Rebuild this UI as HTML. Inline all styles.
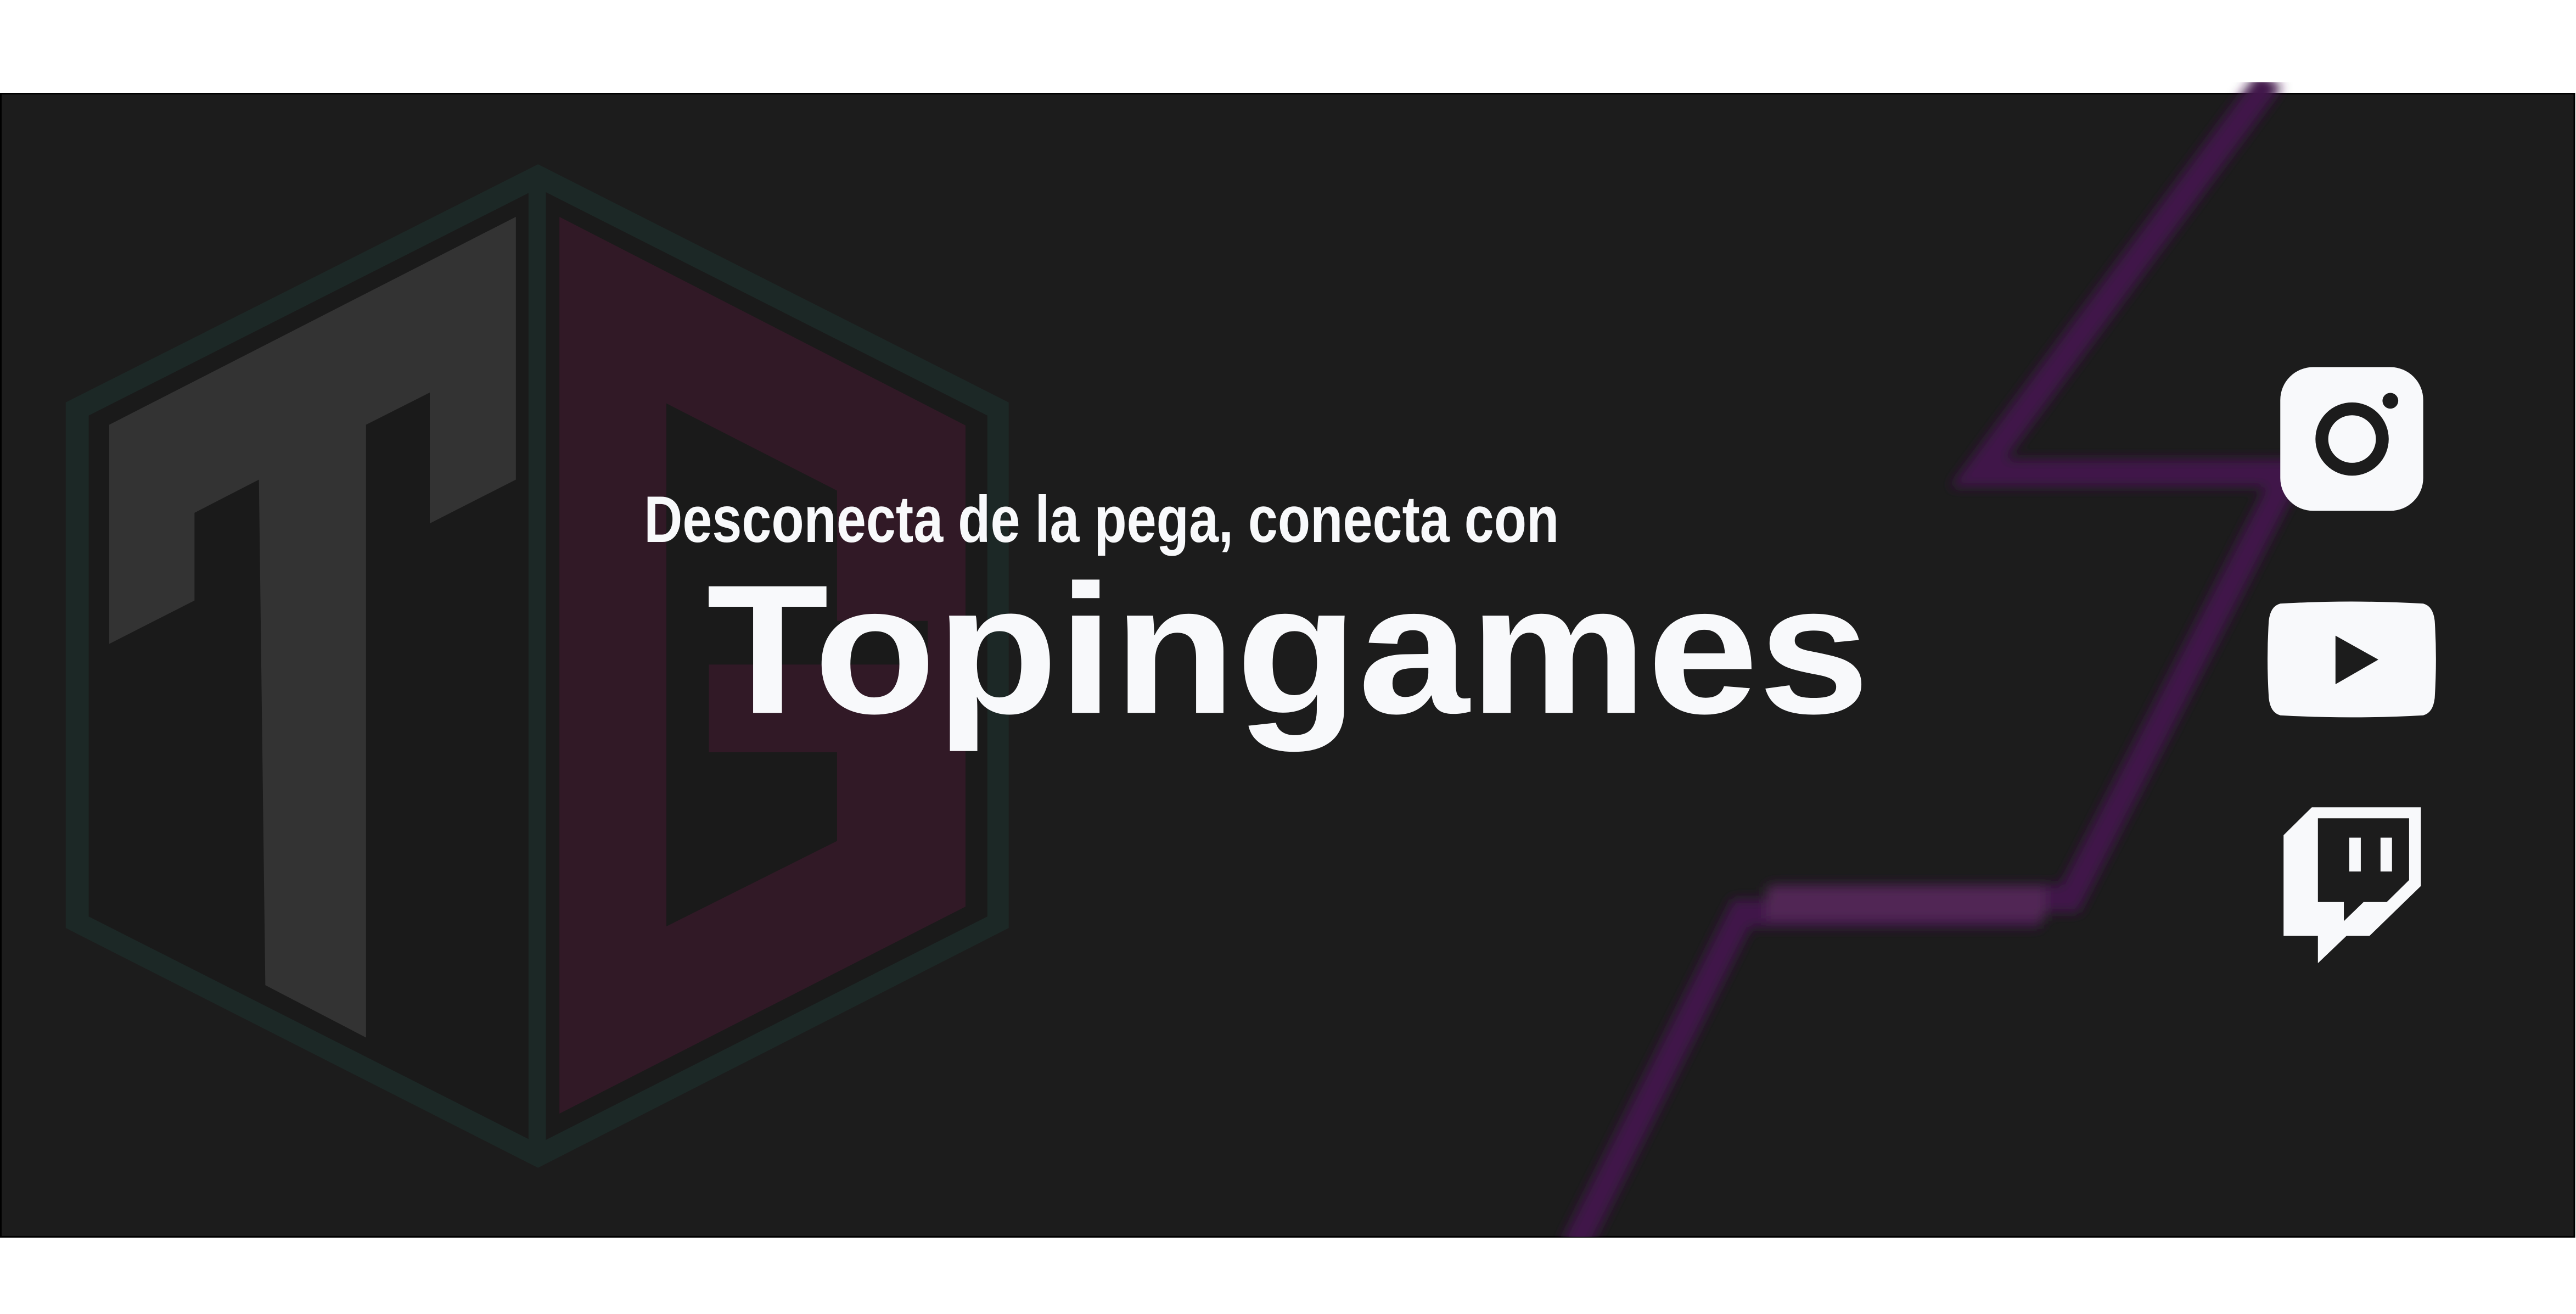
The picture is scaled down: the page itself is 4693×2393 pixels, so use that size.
<!DOCTYPE html>
<html><head><meta charset="utf-8">
<style>
html,body{margin:0;padding:0;background:#fff;}
svg{display:block;}
</style></head>
<body>
<svg width="4693" height="2393" viewBox="0 0 1568 800" preserveAspectRatio="none" xmlns="http://www.w3.org/2000/svg">
<defs>
<filter id="gl" x="-20%" y="-20%" width="140%" height="140%"><feGaussianBlur stdDeviation="3.5"/></filter>
<clipPath id="cb"><rect x="0" y="50" width="1568" height="703"/></clipPath>
</defs>
<rect x="0" y="0" width="1568" height="800" fill="#ffffff"/>
<rect x="0.5" y="57" width="1566.5" height="696" fill="#1c1c1c" stroke="#000" stroke-width="1"/>

<polygon points="327.5,100 614,245 614,565 327.5,711 40,565 40,245" fill="#1c2826"/>
<polygon points="327.5,114.6 601,253 601,558 327.5,696.4 54,558 54,253" fill="#1a1a1a"/>
<rect x="321.7" y="104" width="10.6" height="600" fill="#1c2826"/>

<polygon points="66.5,258.6 314,132 314,292 261.6,318.7 261.6,239 222.8,258.6 222.8,631.7 161.5,599.8 157.6,292 118.4,312.2 118.4,365.6 66.5,392" fill="#333333"/>
<polygon points="340.5,132 587.7,259 587.7,552 340.5,678" fill="#311926"/>
<polygon points="405.6,245.6 509.5,298.7 509.5,378 564.7,378 564.7,404.6 431.5,404.6 431.5,458 509.5,458 509.5,512 405.6,564" fill="#1a1a1a"/>

<g clip-path="url(#cb)" filter="url(#gl)">
<polyline points="1382,48 1204,288 1393,288 1260,547 1078,547" fill="none" stroke="#40184a" stroke-width="17" stroke-linejoin="miter"/>
<polyline points="1242,556 1060,556 958,760" fill="none" stroke="#40184a" stroke-width="17" stroke-linejoin="miter"/>
<rect x="1075" y="540" width="170" height="20" fill="#552d58" opacity="0.8"/>
</g>

<text x="392" y="330" font-family="Liberation Sans, sans-serif" font-weight="bold" font-size="40" fill="#f8f9fb" textLength="557" lengthAdjust="spacingAndGlyphs">Desconecta de la pega, conecta con</text>
<text x="430" y="434" font-family="Liberation Sans, sans-serif" font-weight="bold" font-size="112" fill="#f8f9fb" textLength="708" lengthAdjust="spacingAndGlyphs">Topingames</text>

<rect x="1388" y="223.5" width="87" height="87.5" rx="20" fill="#f8f9fb"/>
<circle cx="1431.7" cy="267.3" r="18.4" fill="none" stroke="#1c1c1c" stroke-width="7.8"/>
<circle cx="1455" cy="244" r="4.8" fill="#1c1c1c"/>

<path d="M1388,367.5 Q1431,365 1475,367.5 Q1481,369 1482,378 Q1483.5,401 1482,425 Q1481,434 1475,435.5 Q1431,438 1388,435.5 Q1382,434 1381,425 Q1379.5,401 1381,378 Q1382,369 1388,367.5 Z" fill="#f8f9fb"/>
<polygon points="1421.6,387 1447.7,401.6 1421.6,416.6" fill="#1c1c1c"/>

<path d="M1390,508.5 L1407.2,491.5 L1473.6,491.5 L1473.6,539.4 L1442.3,569.8 L1428.3,569.8 L1410.9,586.4 L1410.9,569.8 L1390,569.8 Z M1410.9,498.2 L1410.9,549.2 L1426.7,549.2 L1426.7,560.8 L1438.7,549.2 L1452.8,549.2 L1466.4,535.8 L1466.4,498.2 Z" fill="#f8f9fb" fill-rule="evenodd"/>
<rect x="1430" y="510" width="7" height="20.6" fill="#f8f9fb"/>
<rect x="1449" y="510" width="7" height="20.6" fill="#f8f9fb"/>
</svg>
</body></html>
